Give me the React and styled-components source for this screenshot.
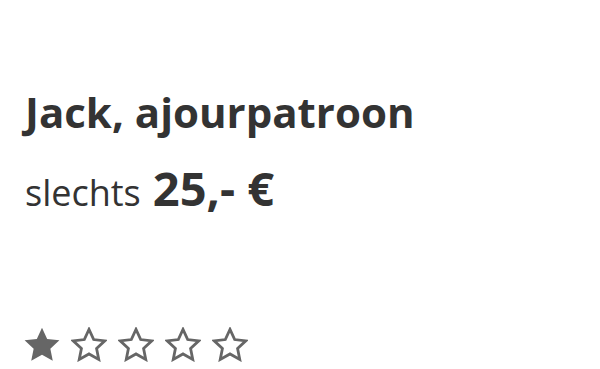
import styled, { createGlobalStyle } from "styled-components";

const GlobalStyle = createGlobalStyle`
  html, body {
    margin: 0;
    padding: 0;
    background: #ffffff;
  }
  body {
    font-family: "Open Sans", "Liberation Sans", sans-serif;
    color: #333333;
  }
`;

const Card = styled.div`
  width: 600px;
  height: 369px;
  box-sizing: border-box;
  padding: 85px 0 0 25px;
  display: flex;
  flex-direction: column;
  overflow: hidden;
`;

const Title = styled.h1`
  margin: 0;
  font-size: 42px;
  font-weight: 700;
  line-height: 54px;
  color: #333333;
`;

const PriceLine = styled.div`
  margin-top: 21px;
  display: flex;
  align-items: baseline;
  gap: 12px;
  line-height: 56px;
`;

const Label = styled.span`
  font-size: 36px;
  font-weight: 400;
`;

const Price = styled.span`
  font-size: 47px;
  font-weight: 700;
`;

const Stars = styled.div`
  margin-top: auto;
  margin-bottom: 7px;
  margin-left: -1px;
  display: flex;
  gap: 11px;
`;

// five-pointed star, centre (18,19), outer radius r
const starPoints = (r, inner) => {
  const pts = [];
  for (let i = 0; i < 10; i++) {
    const rad = i % 2 === 0 ? r : r * inner;
    const a = (Math.PI / 5) * i - Math.PI / 2;
    pts.push(`${(18 + rad * Math.cos(a)).toFixed(2)},${(19 + rad * Math.sin(a)).toFixed(2)}`);
  }
  return pts.join(" ");
};

const StarIcon = ({ filled }) => (
  <svg width="36" height="35" viewBox="0 0 36 35">
    {filled ? (
      <polygon points={starPoints(18.3, 0.48)} fill="#666666" />
    ) : (
      <polygon
        points={starPoints(16.6, 0.48)}
        fill="none"
        stroke="#666666"
        strokeWidth="2.8"
        strokeLinejoin="miter"
      />
    )}
  </svg>
);

export default function App() {
  const rating = 1;
  return (
    <>
      <GlobalStyle />
      <Card>
        <Title>Jack, ajourpatroon</Title>
        <PriceLine>
          <Label>slechts</Label>
          <Price>25,- €</Price>
        </PriceLine>
        <Stars>
          {[0, 1, 2, 3, 4].map((i) => (
            <StarIcon key={i} filled={i < rating} />
          ))}
        </Stars>
      </Card>
    </>
  );
}
